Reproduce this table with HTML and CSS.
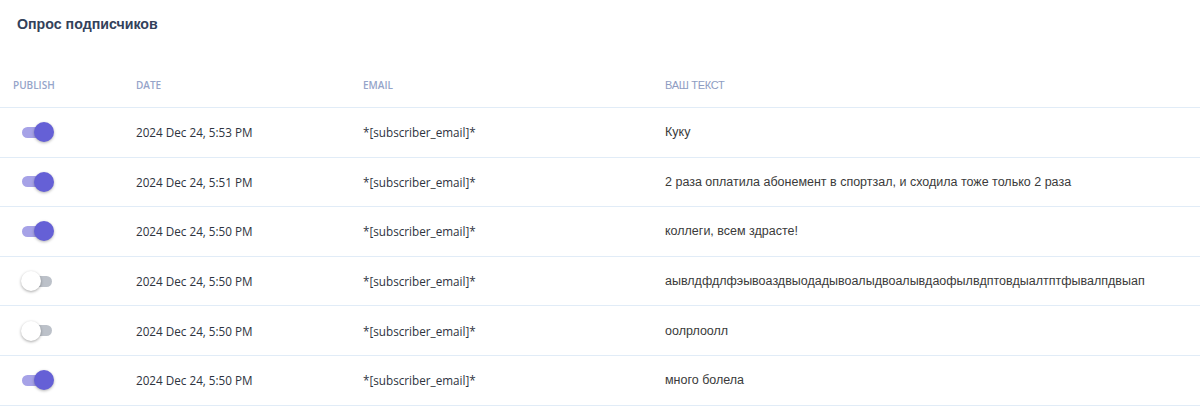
FILE: index.html
```html
<!DOCTYPE html>
<html lang="ru">
<head>
<meta charset="utf-8">
<title>Опрос подписчиков</title>
<link rel="stylesheet" href="styles.css">
</head>
<body>
<h1 class="title">Опрос подписчиков</h1>
<div class="table">
  <div class="row head">
    <div class="cell c1">PUBLISH</div>
    <div class="cell">DATE</div>
    <div class="cell">EMAIL</div>
    <div class="cell cyr">ВАШ ТЕКСТ</div>
  </div>
  <div class="row">
    <div class="cell c1"><span class="switch on"><span class="knob"></span></span></div>
    <div class="cell date">2024 Dec 24, 5:53 PM</div>
    <div class="cell date">*[subscriber_email]*</div>
    <div class="cell text">Куку</div>
  </div>
  <div class="row">
    <div class="cell c1"><span class="switch on"><span class="knob"></span></span></div>
    <div class="cell date">2024 Dec 24, 5:51 PM</div>
    <div class="cell date">*[subscriber_email]*</div>
    <div class="cell text">2 раза оплатила абонемент в спортзал, и сходила тоже только 2 раза</div>
  </div>
  <div class="row">
    <div class="cell c1"><span class="switch on"><span class="knob"></span></span></div>
    <div class="cell date">2024 Dec 24, 5:50 PM</div>
    <div class="cell date">*[subscriber_email]*</div>
    <div class="cell text">коллеги, всем здрасте!</div>
  </div>
  <div class="row">
    <div class="cell c1"><span class="switch"><span class="knob"></span></span></div>
    <div class="cell date">2024 Dec 24, 5:50 PM</div>
    <div class="cell date">*[subscriber_email]*</div>
    <div class="cell text">аывлдфдлфэывоаздвыодадывоалыдвоалывдаофылвдптовдыалтптфывалпдвыап</div>
  </div>
  <div class="row">
    <div class="cell c1"><span class="switch"><span class="knob"></span></span></div>
    <div class="cell date">2024 Dec 24, 5:50 PM</div>
    <div class="cell date">*[subscriber_email]*</div>
    <div class="cell text">оолрлоолл</div>
  </div>
  <div class="row">
    <div class="cell c1"><span class="switch on"><span class="knob"></span></span></div>
    <div class="cell date">2024 Dec 24, 5:50 PM</div>
    <div class="cell date">*[subscriber_email]*</div>
    <div class="cell text">много болела</div>
  </div>
</div>
</body>
</html>
```

FILE: styles.css
```css
html, body {
  margin: 0;
  padding: 0;
  background: #ffffff;
}
body {
  font-family: "Liberation Sans", Arial, sans-serif;
  color: #333333;
}
.title {
  margin: 0;
  padding: 16px 17px 0;
  font-size: 14.2px;
  line-height: 17px;
  font-weight: bold;
  color: #33415a;
}
.table {
  margin-top: 30px;
}
.row {
  display: grid;
  grid-template-columns: 136px 227px 302px 1fr;
  align-items: center;
  box-sizing: border-box;
  height: 49.6px;
  border-bottom: 1px solid #e1ecf7;
}
.row.head {
  height: 45px;
  font-family: "Open Sans", sans-serif;
  font-size: 10px;
  font-weight: 600;
  color: #95a4c9;
}
.row.head .cyr {
  font-family: "Liberation Sans", Arial, sans-serif;
  font-size: 11px;
  letter-spacing: -0.3px;
  font-weight: normal;
  color: #8e9cc2;
}
.cell.c1 {
  padding-left: 13px;
}
.date {
  font-family: "Open Sans", sans-serif;
  font-size: 11.7px;
  color: #2e3440;
}
.text {
  font-size: 12.5px;
  color: #3a3a3a;
}
.switch {
  position: relative;
  display: block;
  width: 30px;
  height: 11px;
  margin-left: 9px;
  border-radius: 6px;
  background: #bcc1c9;
}
.switch.on {
  background: #a6a2e7;
}
.knob {
  position: absolute;
  top: -4.5px;
  left: -1px;
  width: 20px;
  height: 20px;
  border-radius: 50%;
  background: #ffffff;
  box-shadow: 0 1px 3px rgba(0, 0, 0, 0.35);
}
.switch.on .knob {
  left: 12px;
  background: #6560d6;
  box-shadow: 0 1px 3px rgba(0, 0, 0, 0.3);
}
```
